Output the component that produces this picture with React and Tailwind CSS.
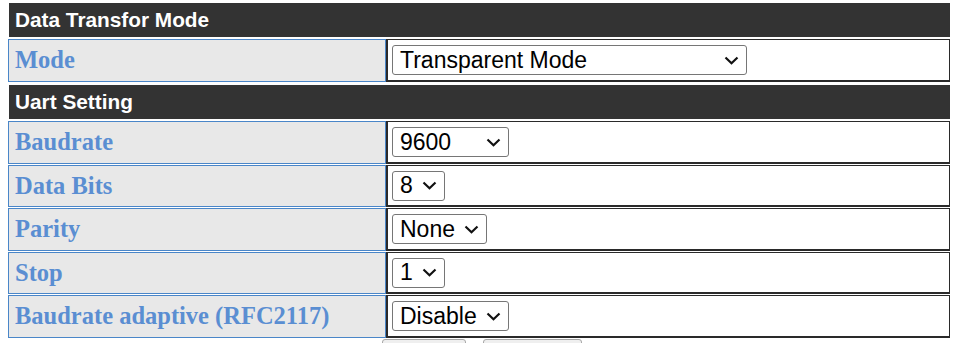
import React from "react";

function Chevron() {
  return (
    <svg width="15" height="9" viewBox="0 0 15 9" className="shrink-0">
      <polyline points="1.5,1.5 7.5,7.2 13.5,1.5" fill="none" stroke="#111" strokeWidth="2.2" />
    </svg>
  );
}

function Select({ value, width }) {
  return (
    <div
      className={`flex items-center h-[30px] border border-[#767676] rounded-[3px] bg-white pl-[7px] pr-[7px] ${width ? "justify-between" : "gap-[9px]"}`}
      style={width ? { width } : undefined}
    >
      <span className="text-[23px] leading-none text-black font-['Liberation_Sans',Arial,sans-serif]">{value}</span>
      <Chevron />
    </div>
  );
}

function Header({ title, className = "" }) {
  return (
    <div className={`ml-[1px] w-[941px] h-[34px] bg-[#333333] flex items-center pl-[6px] ${className}`}>
      <span className="text-white font-bold text-[20.8px] leading-none font-['Liberation_Sans',Arial,sans-serif]">{title}</span>
    </div>
  );
}

function Row({ label, value, width, h, className = "" }) {
  return (
    <div className={`flex ${h} ${className}`}>
      <div className="w-[378px] h-full border border-[#4a86c8] bg-[#e8e8e8] flex items-center pl-[6px]">
        <span className="font-['Liberation_Serif','Times_New_Roman',serif] font-bold text-[24.5px] leading-none text-[#5a8ed2]">
          {label}
        </span>
      </div>
      <div className="w-[564px] h-full border border-[#2a2a2a] border-l-2 border-b-2 bg-white flex items-center pl-[4px]">
        <Select value={value} width={width} />
      </div>
    </div>
  );
}

export default function App() {
  return (
    <div className="w-[969px] min-h-[343px] bg-white pl-[8px] pt-[3px] flex flex-col">
      <Header title="Data Transfor Mode" />
      <Row label="Mode" value="Transparent Mode" width={355} h="h-[43px]" className="mt-[2px]" />
      <Header title="Uart Setting" className="mt-[3px]" />
      <Row label="Baudrate" value="9600" width={117} h="h-[43px]" className="mt-[2px]" />
      <Row label="Data Bits" value="8" h="h-[42px]" className="mt-[1px]" />
      <Row label="Parity" value="None" h="h-[43px]" className="mt-[1px]" />
      <Row label="Stop" value="1" h="h-[42px]" className="mt-[1px]" />
      <Row label="Baudrate adaptive (RFC2117)" value="Disable" h="h-[43px]" className="mt-[1px]" />
      <div className="flex mt-[1px] pl-[374px] gap-[17px]">
        <div className="w-[84px] h-[30px] border border-[#a8a8a8] rounded-[3px] bg-[#efefef]" />
        <div className="w-[99px] h-[30px] border border-[#a8a8a8] rounded-[3px] bg-[#efefef]" />
      </div>
    </div>
  );
}
